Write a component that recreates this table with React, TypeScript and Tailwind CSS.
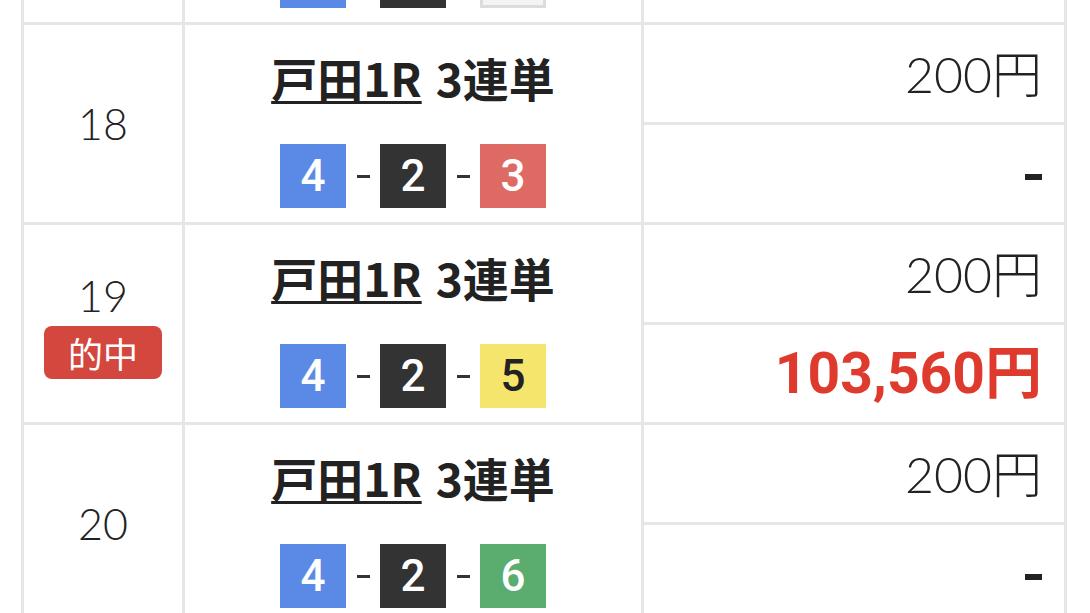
import React from "react";

const boatStyle: Record<number, string> = {
  1: "bg-[#f4f4f4] text-[#222] border-[3px] border-[#dcdcdc]",
  2: "bg-[#333333] text-white",
  3: "bg-[#de6a64] text-white",
  4: "bg-[#5b8ae6] text-white",
  5: "bg-[#f5e56c] text-[#222]",
  6: "bg-[#5aad6f] text-white",
};

function Box({ n }: { n: number }) {
  return (
    <div
      className={`w-[66px] h-[64px] flex items-center justify-center text-[44px] leading-none font-medium ${boatStyle[n]}`}
      style={{ fontFamily: "Roboto, 'Liberation Sans', sans-serif" }}
    >
      {n}
    </div>
  );
}

function Dash() {
  return (
    <div className="w-[34px] flex items-center justify-center">
      <div className="w-[13px] h-[3px] bg-[#333]" />
    </div>
  );
}

const jp = { fontFamily: "'Noto Sans CJK JP', 'Noto Sans', sans-serif" };
const thin = { fontFamily: "Lato, 'Noto Sans CJK JP', sans-serif" };

type Row = {
  no: number;
  hit?: boolean;
  boats: number[];
  payout: string;
};

const rows: Row[] = [
  { no: 17, boats: [4, 2, 1], payout: "-" },
  { no: 18, boats: [4, 2, 3], payout: "-" },
  { no: 19, hit: true, boats: [4, 2, 5], payout: "103,560円" },
  { no: 20, boats: [4, 2, 6], payout: "-" },
];

export default function App() {
  return (
    <div className="w-[1090px] h-[613px] overflow-hidden bg-white pl-[21px]">
      <div className="mt-[-178px] w-[1046px] grid grid-cols-[158px_456px_420px] auto-rows-[97px] gap-[3px] p-[3px] bg-[#e6e6e6]">
        {rows.map((r) => (
          <React.Fragment key={r.no}>
            <div
              className={`row-span-2 bg-white flex flex-col items-center ${
                r.hit ? "pt-[49px]" : "justify-center"
              }`}
            >
              <div className="text-[43px] leading-none font-light text-[#222]" style={thin}>
                {r.no}
              </div>
              {r.hit && (
                <div
                  className="mt-[9px] w-[118px] h-[53px] rounded-[8px] bg-[#d4473f] flex items-center justify-center text-[35px] leading-none text-white"
                  style={jp}
                >
                  的中
                </div>
              )}
            </div>
            <div className="row-span-2 bg-white flex flex-col items-center">
              <div
                className="mt-[29px] text-[46px] leading-none font-bold text-[#222] whitespace-nowrap"
                style={jp}
              >
                <span className="underline decoration-[3px] underline-offset-[4px]">戸田1R</span>
                <span className="ml-[14px]">3連単</span>
              </div>
              <div className="mt-[44px] flex items-stretch">
                <Box n={r.boats[0]} />
                <Dash />
                <Box n={r.boats[1]} />
                <Dash />
                <Box n={r.boats[2]} />
              </div>
            </div>
            <div className="bg-white flex items-center justify-end pr-[22px]">
              <span className="text-[50px] leading-none font-light text-[#222]" style={thin}>
                200円
              </span>
            </div>
            <div className="bg-white flex items-center justify-end pr-[22px]">
              {r.payout === "-" ? (
                <div className="mt-[7px] w-[17px] h-[6px] bg-[#222]" />
              ) : (
                <span
                  className="text-[57px] leading-none font-bold text-[#de3a2e]"
                  style={{ fontFamily: "Roboto, 'Noto Sans CJK JP', sans-serif" }}
                >
                  {r.payout}
                </span>
              )}
            </div>
          </React.Fragment>
        ))}
      </div>
    </div>
  );
}
